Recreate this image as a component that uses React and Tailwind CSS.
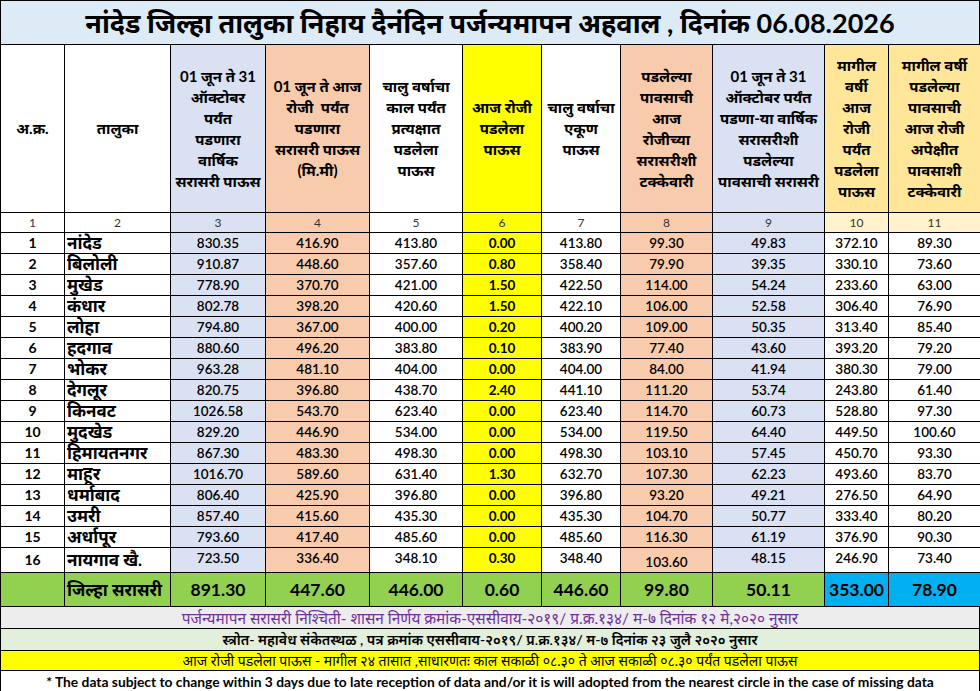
import React from "react";

const cols =
  "grid grid-rows-1 grid-cols-[64px_106px_95px_104px_93px_79px_79px_92px_112px_64px_92px]";

const dataBg = [
  "bg-white",
  "bg-white",
  "bg-[#d9e1f2]",
  "bg-[#f8cbad]",
  "bg-white",
  "bg-[#ffff00]",
  "bg-white",
  "bg-[#f8cbad]",
  "bg-[#d9e1f2]",
  "bg-white",
  "bg-white",
];
const headBg = [...dataBg.slice(0, 9), "bg-[#ffe699]", "bg-[#ffe699]"];
const numBg = [...dataBg.slice(0, 9), "bg-[#fff2cc]", "bg-[#fff2cc]"];

const headers = [
  ["अ.क्र."],
  ["तालुका"],
  ["01 जून ते 31", "ऑक्टोबर", "पर्यंत", "पडणारा", "वार्षिक", "सरासरी पाऊस"],
  ["01 जून ते आज", "रोजी  पर्यंत", "पडणारा", "सरासरी पाऊस", "(मि.मी)"],
  ["चालु वर्षाचा", "काल पर्यंत", "प्रत्यक्षात", "पडलेला", "पाऊस"],
  ["आज रोजी", "पडलेला", "पाऊस"],
  ["चालु वर्षाचा", "एकूण", "पाऊस"],
  ["पडलेल्या", "पावसाची", "आज", "रोजीच्या", "सरासरीशी", "टक्केवारी"],
  ["01 जून ते 31", "ऑक्टोबर पर्यंत", "पडणा-या वार्षिक", "सरासरीशी", "पडलेल्या", "पावसाची सरासरी"],
  ["मागील", "वर्षी", "आज", "रोजी", "पर्यंत", "पडलेला", "पाऊस"],
  ["मागील वर्षी", "पडलेल्या", "पावसाची", "आज रोजी", "अपेक्षीत", "पावसाशी", "टक्केवारी"],
];

const rows = [
  [1, "नांदेड", "830.35", "416.90", "413.80", "0.00", "413.80", "99.30", "49.83", "372.10", "89.30"],
  [2, "बिलोली", "910.87", "448.60", "357.60", "0.80", "358.40", "79.90", "39.35", "330.10", "73.60"],
  [3, "मुखेड", "778.90", "370.70", "421.00", "1.50", "422.50", "114.00", "54.24", "233.60", "63.00"],
  [4, "कंधार", "802.78", "398.20", "420.60", "1.50", "422.10", "106.00", "52.58", "306.40", "76.90"],
  [5, "लोहा", "794.80", "367.00", "400.00", "0.20", "400.20", "109.00", "50.35", "313.40", "85.40"],
  [6, "हदगाव", "880.60", "496.20", "383.80", "0.10", "383.90", "77.40", "43.60", "393.20", "79.20"],
  [7, "भोकर", "963.28", "481.10", "404.00", "0.00", "404.00", "84.00", "41.94", "380.30", "79.00"],
  [8, "देगलूर", "820.75", "396.80", "438.70", "2.40", "441.10", "111.20", "53.74", "243.80", "61.40"],
  [9, "किनवट", "1026.58", "543.70", "623.40", "0.00", "623.40", "114.70", "60.73", "528.80", "97.30"],
  [10, "मुदखेड", "829.20", "446.90", "534.00", "0.00", "534.00", "119.50", "64.40", "449.50", "100.60"],
  [11, "हिमायतनगर", "867.30", "483.30", "498.30", "0.00", "498.30", "103.10", "57.45", "450.70", "93.30"],
  [12, "माहूर", "1016.70", "589.60", "631.40", "1.30", "632.70", "107.30", "62.23", "493.60", "83.70"],
  [13, "धर्माबाद", "806.40", "425.90", "396.80", "0.00", "396.80", "93.20", "49.21", "276.50", "64.90"],
  [14, "उमरी", "857.40", "415.60", "435.30", "0.00", "435.30", "104.70", "50.77", "333.40", "80.20"],
  [15, "अर्धापूर", "793.60", "417.40", "485.60", "0.00", "485.60", "116.30", "61.19", "376.90", "90.30"],
  [16, "नायगाव खै.", "723.50", "336.40", "348.10", "0.30", "348.40", "103.60", "48.15", "246.90", "73.40"],
];

const totals = ["891.30", "447.60", "446.00", "0.60", "446.60", "99.80", "50.11", "353.00", "78.90"];

const cell =
  "border-r border-b border-black flex items-center justify-center overflow-hidden min-h-0";

export default function App() {
  return (
    <div className="w-[980px] h-[691px] overflow-hidden bg-white text-black font-['Lato','Noto_Sans',sans-serif]">
      <div className="border-l border-t border-black">
        {/* Title */}
        <div className="h-[44px] bg-[#ddebf7] border-r border-b border-black flex items-center justify-center text-[27px] leading-[44px] font-bold overflow-hidden whitespace-nowrap">
          नांदेड जिल्हा तालुका निहाय दैनंदिन पर्जन्यमापन अहवाल , दिनांक 06.08.2026
        </div>

        {/* Header */}
        <div className={`${cols} h-[168px]`}>
          {headers.map((lines, i) => (
            <div
              key={i}
              className={`${cell} ${headBg[i]} flex-col text-center text-[15px] font-bold leading-[21px]`}
            >
              {lines.map((l, j) => (
                <div key={j} className="whitespace-pre">
                  {l}
                </div>
              ))}
            </div>
          ))}
        </div>

        {/* Number row */}
        <div className={`${cols} h-[20px]`}>
          {numBg.map((bg, i) => (
            <div key={i} className={`${cell} ${bg} text-[12px] leading-[18px] text-[#333]`}>
              {i + 1}
            </div>
          ))}
        </div>

        {/* Data rows */}
        {rows.map((r, ri) => (
          <div key={ri} className={`${cols} ${ri === 15 ? "h-[25px]" : "h-[21px]"}`}>
            {r.map((v, i) => {
              if (i === 0)
                return (
                  <div key={i} className={`${cell} ${dataBg[i]} text-[14px] leading-[20px] font-bold`}>
                    {v}
                  </div>
                );
              if (i === 1)
                return (
                  <div
                    key={i}
                    className={`border-r border-b border-black flex items-center justify-start pl-[2px] overflow-hidden min-h-0 ${dataBg[i]} text-[17px] leading-[20px] font-bold whitespace-nowrap`}
                  >
                    {v}
                  </div>
                );
              return (
                <div
                  key={i}
                  className={`${cell} ${dataBg[i]} text-[13.5px] leading-[20px] ${i === 5 ? "font-bold" : "font-semibold"} ${
                    ri === 15 && i === 7 ? "!items-end" : ""
                  } ${ri === 15 && i !== 7 ? "!items-start" : ""}`}
                >
                  {v}
                </div>
              );
            })}
          </div>
        ))}

        {/* Totals */}
        <div className={`${cols} h-[34px] bg-[#92d050]`}>
          <div className="border-r border-b border-black"></div>
          <div className="border-r border-b border-black flex items-center pl-[2px] text-[17px] leading-[24px] font-bold whitespace-nowrap overflow-hidden min-h-0">
            जिल्हा सरासरी
          </div>
          {totals.map((t, i) => (
            <div
              key={i}
              className={`${cell} text-[17.5px] leading-[24px] font-bold ${i >= 7 ? "bg-[#00b0f0]" : ""}`}
            >
              {t}
            </div>
          ))}
        </div>

        {/* Footers */}
        <div className="h-[22px] bg-[#ededed] border-r border-b border-black flex items-center justify-center text-[15.4px] leading-[20px] text-[#7030a0] overflow-hidden whitespace-nowrap">
          पर्जन्यमापन सरासरी निश्चिती- शासन निर्णय क्रमांक-एससीवाय-२०१९/ प्र.क्र.१३४/ म-७ दिनांक १२ मे,२०२० नुसार
        </div>
        <div className="h-[22px] bg-[#e2efda] border-r border-b border-black flex items-center justify-center text-[14.2px] leading-[20px] font-semibold overflow-hidden whitespace-nowrap">
          स्त्रोत- महावेध संकेतस्थळ , पत्र क्रमांक एससीवाय-२०१९/ प्र.क्र.१३४/ म-७ दिनांक २३ जुलै २०२० नुसार
        </div>
        <div className="h-[20px] bg-[#ffff00] border-r border-b border-black flex items-center justify-center text-[14px] leading-[18px] overflow-hidden whitespace-nowrap">
          आज रोजी पडलेला पाऊस - मागील २४ तासात ,साधारणतः काल सकाळी ०८.३० ते आज सकाळी ०८.३० पर्यंत पडलेला पाऊस
        </div>
        <div className="h-[21px] bg-white border-r border-b border-black flex items-center justify-center text-[13.8px] leading-[19px] font-bold overflow-hidden whitespace-nowrap">
          * The data subject to change within 3 days due to late reception of data and/or it is will adopted from the nearest circle in the case of missing data
        </div>
      </div>
    </div>
  );
}
